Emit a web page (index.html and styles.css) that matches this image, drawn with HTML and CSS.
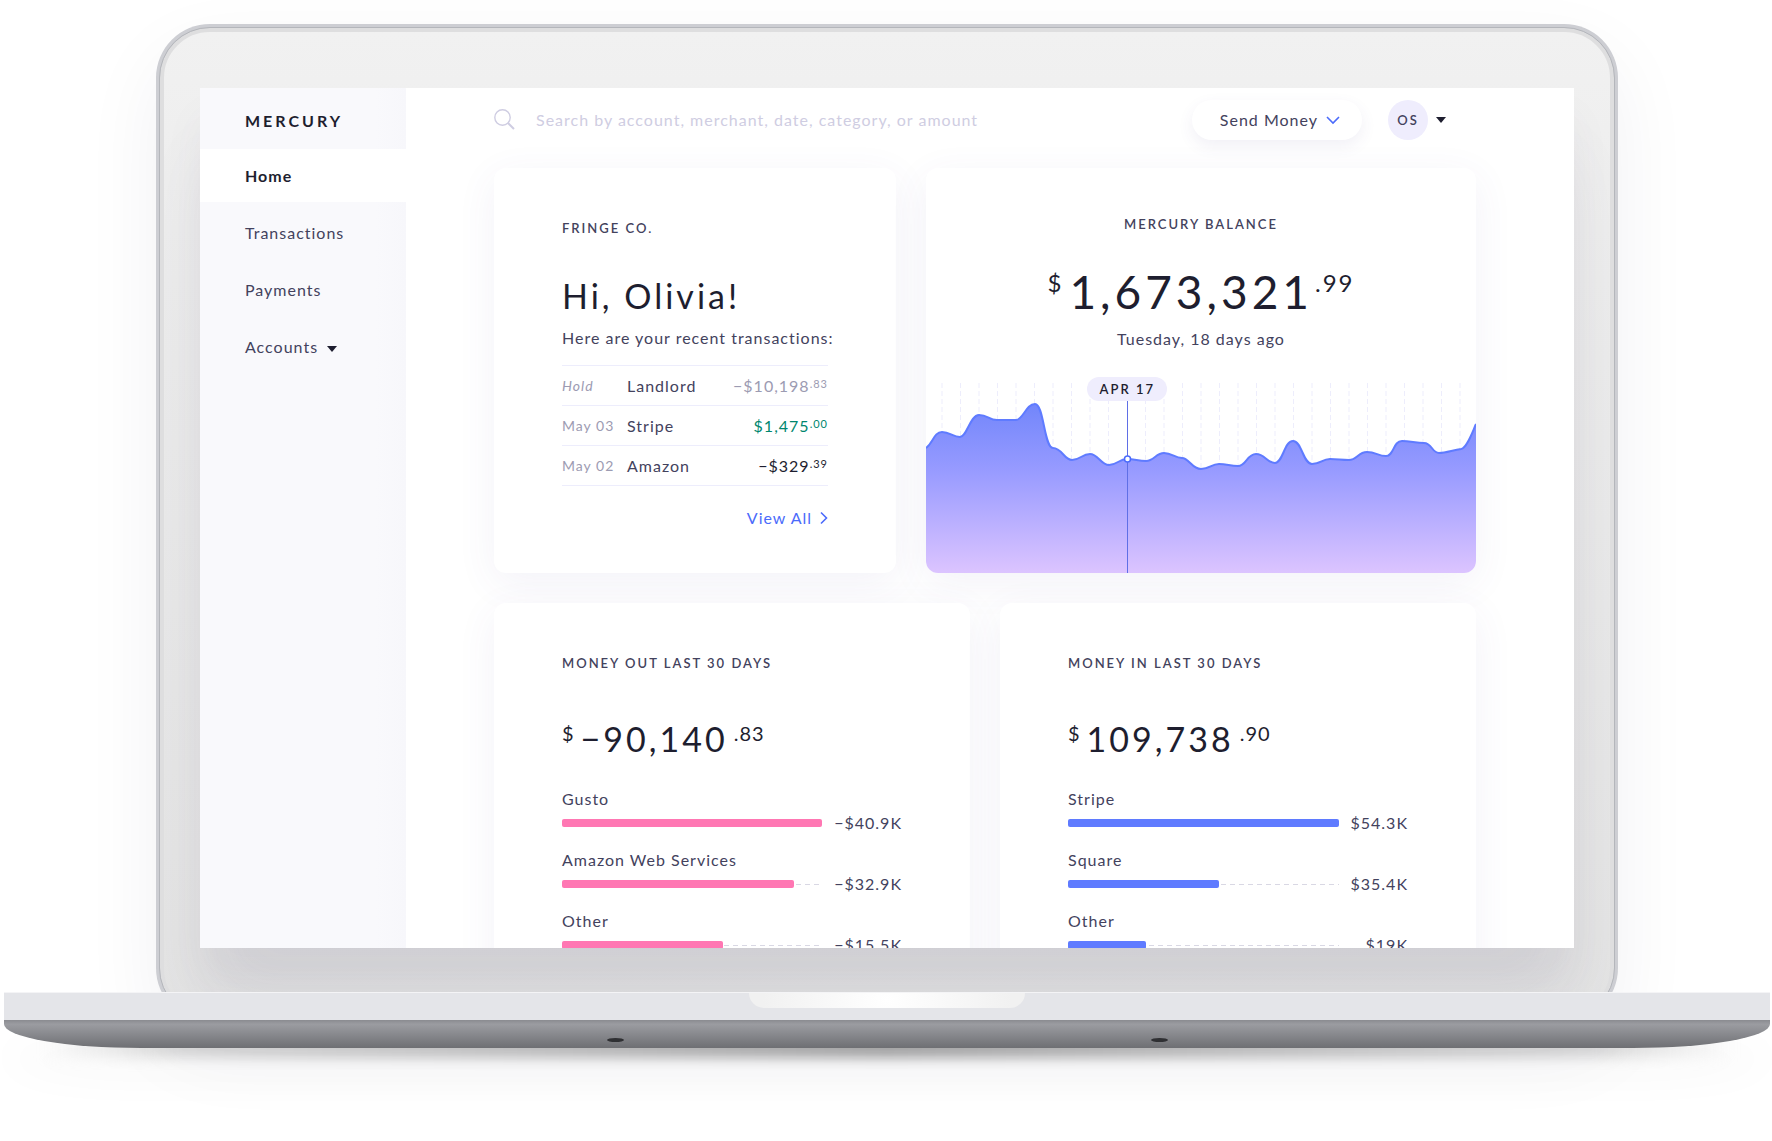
FILE: index.html
```html
<!DOCTYPE html>
<html lang="en">
<head>
    <meta charset="utf-8">
    <meta name="viewport" content="width=device-width, initial-scale=1">
    <title>Mercury</title>
    <link rel="stylesheet" href="styles.css">
</head>
<body>
    <div class="laptop">
        <div class="lid">
            <div class="bezel">
                <div class="screen">
                    <aside class="sidebar">
                        <a class="logo" href="#">MERCURY</a>
                        <nav class="nav">
                            <a class="active" href="#">Home</a>
                            <a href="#">Transactions</a>
                            <a href="#">Payments</a>
                            <a href="#">Accounts <span class="caret"></span></a>
                        </nav>
                    </aside>

                    <main class="main">
                        <header class="topbar">
                            <label class="search">
                                <svg width="22" height="22" viewBox="0 0 22 22" fill="none" stroke="currentColor">
                                    <circle cx="8.5" cy="8.5" r="7.7" stroke-width="1.4"/>
                                    <path d="M14 14l6 6" stroke-width="2"/>
                                </svg>
                                <input type="text" aria-label="Search" placeholder="Search by account, merchant, date, category, or amount">
                            </label>
                            <button class="send" type="button">
                                Send Money
                                <svg width="14" height="10" viewBox="0 0 14 10" fill="none" stroke="#4b6bfb" stroke-width="1.6">
                                    <path d="M1 2l6 6 6-6"/>
                                </svg>
                            </button>
                            <button class="user" type="button">
                                <span class="avatar">OS</span>
                                <span class="caret"></span>
                            </button>
                        </header>

                        <div class="row row-top">
                            <section class="card">
                                <h2 class="label">FRINGE CO.</h2>
                                <h1 class="greeting">Hi, Olivia!</h1>
                                <p class="intro">Here are your recent transactions:</p>
                                <table class="transactions">
                                    <tr class="hold">
                                        <td class="date">Hold</td>
                                        <td>Landlord</td>
                                        <td class="amount">−$10,198<sup>.83</sup></td>
                                    </tr>
                                    <tr class="credit">
                                        <td class="date">May 03</td>
                                        <td>Stripe</td>
                                        <td class="amount">$1,475<sup>.00</sup></td>
                                    </tr>
                                    <tr>
                                        <td class="date">May 02</td>
                                        <td>Amazon</td>
                                        <td class="amount">−$329<sup>.39</sup></td>
                                    </tr>
                                </table>
                                <a class="view-all" href="#">
                                    View All
                                    <svg width="8" height="14" viewBox="0 0 8 14" fill="none" stroke="currentColor" stroke-width="1.6">
                                        <path d="M1 1.5L6.500 7 1 12.500"/>
                                    </svg>
                                </a>
                            </section>

                            <section class="card balance">
                                <h2 class="label">MERCURY BALANCE</h2>
                                <p class="balance-total"><span class="unit">$</span>1,673,321<span class="unit cents">.99</span></p>
                                <p class="balance-date">Tuesday, 18 days ago</p>
                                <div class="chart">
                                    <svg viewBox="0 0 550 192" preserveAspectRatio="none">
                                        <defs>
                                            <linearGradient id="area" x1="0" y1="0" x2="0" y2="1">
                                                <stop offset="0" stop-color="#7286fb"/>
                                                <stop offset="0.4" stop-color="#989bff"/>
                                                <stop offset="1" stop-color="#dcc4ff"/>
                                            </linearGradient>
                                        </defs>
                                        <path class="grid-lines" d="M16 2V192M34.500 2V192M53 2V192M71.500 2V192M90 2V192M108.500 2V192M127 2V192M145.500 2V192M164 2V192M182.500 2V192M219.500 2V192M238 2V192M256.500 2V192M275 2V192M293.500 2V192M312 2V192M330.500 2V192M349 2V192M367.500 2V192M386 2V192M404.500 2V192M423 2V192M441.500 2V192M460 2V192M478.500 2V192M497 2V192M515.500 2V192M534 2V192"/>
                                        <path fill="url(#area)" d="M0 67C7 62 8 51 16 51S27 56 34 56 44 34 53 34 63 39 71 39H90C97 39 100 23 109 23S118 67 127 67 138 79 146 79 156 73 164 73 175 84 183 84 193 78 201 78 212 80 220 80 230 72 238 72 249 77 256 77 266 88 275 88 285 83 293 83 304 85 312 85 321 73 330 73 341 82 349 82 358 60 367 60 377 83 386 83 396 78 404 78 415 79 423 79 432 71 441 71 452 75 460 75 467 60 476 60C484 60 490 62 498 62S506 72 513 72C520 72 527 69 535 68C541 67 546 52 550 43V192H0Z"/>
                                        <path class="curve" d="M0 67C7 62 8 51 16 51S27 56 34 56 44 34 53 34 63 39 71 39H90C97 39 100 23 109 23S118 67 127 67 138 79 146 79 156 73 164 73 175 84 183 84 193 78 201 78 212 80 220 80 230 72 238 72 249 77 256 77 266 88 275 88 285 83 293 83 304 85 312 85 321 73 330 73 341 82 349 82 358 60 367 60 377 83 386 83 396 78 404 78 415 79 423 79 432 71 441 71 452 75 460 75 467 60 476 60C484 60 490 62 498 62S506 72 513 72C520 72 527 69 535 68C541 67 546 52 550 43"/>
                                        <path class="cursor" d="M201.500 18V192"/>
                                        <circle class="point" cx="201.500" cy="78" r="3"/>
                                    </svg>
                                    <span class="chart-date">APR 17</span>
                                </div>
                            </section>
                        </div>

                        <div class="row">
                            <section class="card flow out">
                                <h2 class="label">MONEY OUT LAST 30 DAYS</h2>
                                <p class="total"><span class="unit">$</span>−90,140<span class="unit">.83</span></p>
                                <div class="bars">
                                    <span class="name">Gusto</span>
                                    <div class="track"><div class="bar" style="width: 100%"></div></div>
                                    <span class="value">−$40.9K</span>
                                    <span class="name">Amazon Web Services</span>
                                    <div class="track"><div class="bar" style="width: 89%"></div></div>
                                    <span class="value">−$32.9K</span>
                                    <span class="name">Other</span>
                                    <div class="track"><div class="bar" style="width: 62%"></div></div>
                                    <span class="value">−$15.5K</span>
                                </div>
                            </section>

                            <section class="card flow in">
                                <h2 class="label">MONEY IN LAST 30 DAYS</h2>
                                <p class="total"><span class="unit">$</span>109,738<span class="unit">.90</span></p>
                                <div class="bars">
                                    <span class="name">Stripe</span>
                                    <div class="track"><div class="bar" style="width: 100%"></div></div>
                                    <span class="value">$54.3K</span>
                                    <span class="name">Square</span>
                                    <div class="track"><div class="bar" style="width: 56%"></div></div>
                                    <span class="value">$35.4K</span>
                                    <span class="name">Other</span>
                                    <div class="track"><div class="bar" style="width: 29%"></div></div>
                                    <span class="value">$19K</span>
                                </div>
                            </section>
                        </div>
                    </main>
                </div>
            </div>
        </div>

        <div class="base">
            <div class="deck"><div class="notch"></div></div>
            <div class="bottom">
                <span class="foot"></span>
                <span class="foot"></span>
            </div>
        </div>
    </div>
</body>
</html>
```
FILE: styles.css
```css
:root {
    --ink: #1e1e2f;
    --text: #43425d;
    --muted: #9c9bb2;
    --pale: #cfcde2;
    --line: #ededfc;
    --lavender: #efedfd;
    --blue: #4b6bfb;
    --bar-blue: #5f7bff;
    --pink: #ff77b3;
    --green: #00866e;
}

* {
    box-sizing: border-box;
}

body {
    margin: 0;
    background: #fff;
    color: var(--text);
    font-family: Lato, "Open Sans", sans-serif;
    font-size: 16px;
    line-height: 24px;
    letter-spacing: 1px;
    overflow-x: hidden;
}

h1, h2, p {
    margin: 0;
    font-weight: 400;
}

a {
    color: inherit;
    text-decoration: none;
}

button, input {
    border: 0;
    padding: 0;
    background: none;
    color: inherit;
    font: inherit;
    letter-spacing: inherit;
}

button {
    cursor: pointer;
}

/* laptop */
.laptop {
    padding: 24px 2px 90px 4px;
}

.lid {
    margin: 0 152px;
    padding: 4px;
    border-radius: 54px;
    background: #cdced3;
    box-shadow: 0 30px 80px rgba(40, 40, 60, 0.06);
}

.bezel {
    padding: 56px 36px 66px;
    border: 4px solid #dededf;
    border-radius: 50px;
    outline: 1px solid #b4b6bb;
    background: linear-gradient(#f1f1f1, #ececec 25%, #e3e3e3);
    overflow: hidden;
}

.screen {
    display: flex;
    aspect-ratio: 1374 / 860;
    background: #fff;
    box-shadow: 0 60px 60px -10px rgba(90, 85, 115, 0.1), 0 30px 40px rgba(90, 85, 115, 0.05);
    overflow: hidden;
}

.base {
    position: relative;
    margin-top: -30px;
}

.base::after {
    content: "";
    position: absolute;
    z-index: -1;
    left: 36px;
    right: 36px;
    bottom: -10px;
    height: 28px;
    background: linear-gradient(90deg, transparent, #ddd 8%, #aaa 50%, #ddd 92%, transparent);
    filter: blur(6px);
}

.deck {
    display: flex;
    justify-content: center;
    height: 28px;
    border-top: 1px solid #f4f4f6;
    background: #e4e5e9;
}

.notch {
    width: 276px;
    height: 15px;
    border-radius: 0 0 20px 20px;
    background: radial-gradient(circle at center, #fff, #f1f1f1 90%);
}

.bottom {
    display: flex;
    justify-content: center;
    align-items: flex-end;
    gap: 527px;
    height: 28px;
    padding-bottom: 6px;
    border-radius: 0 0 137px 137px / 0 0 24px 24px;
    background: linear-gradient(#8a8b90, #9b9ca1 15%, #6e6f73);
    box-shadow: 0 30px 40px rgba(0, 0, 0, 0.03);
}

.foot {
    width: 17px;
    height: 4px;
    border-radius: 50%;
    background: #2f3033;
}

/* sidebar */
.sidebar {
    flex: 0 0 206px;
    background: linear-gradient(90deg, #f9f9fc 85%, #f7f7fb);
}

.logo {
    display: block;
    padding: 21px 45px 16px;
    color: var(--ink);
    font-weight: 700;
    letter-spacing: 3px;
}

.nav {
    display: flex;
    flex-direction: column;
    gap: 4px;
}

.nav a {
    padding: 15px 45px 14px;
}

.nav .active {
    background: #fff;
    color: var(--ink);
    font-weight: 700;
}

.caret {
    display: inline-block;
    margin-left: 4px;
    border: 5px solid transparent;
    border-top: 6px solid var(--ink);
    border-bottom: 0;
    vertical-align: 1px;
}

/* content */
.main {
    flex: 1;
    min-width: 0;
    padding: 12px 98px 0 88px;
}

.topbar {
    display: flex;
    align-items: center;
    height: 40px;
    margin-bottom: 28px;
    padding-right: 30px;
}

.search {
    display: flex;
    flex: 1;
    align-items: center;
    gap: 20px;
    color: var(--pale);
}

.search input {
    flex: 1;
    color: var(--text);
    outline: none;
}

.search input::placeholder {
    color: var(--pale);
    opacity: 1;
}

.send {
    display: flex;
    align-items: center;
    gap: 8px;
    height: 40px;
    margin-right: 26px;
    padding: 0 22px 0 28px;
    border-radius: 20px;
    background: #fff;
    box-shadow: 0 6px 16px rgba(80, 70, 140, 0.08);
}

.user {
    display: flex;
    align-items: center;
    gap: 4px;
}

.avatar {
    width: 40px;
    border-radius: 50%;
    background: var(--lavender);
    font-size: 13px;
    font-weight: 600;
    line-height: 40px;
    letter-spacing: 2px;
}

.row {
    display: grid;
    grid-template-columns: 1fr 1fr;
    gap: 30px;
    margin-bottom: 30px;
}

.row-top {
    grid-template-columns: 402fr 550fr;
}

.card {
    min-width: 0;
    padding: 48px 68px 43px;
    border-radius: 12px;
    background: #fff;
    box-shadow: 0 10px 40px rgba(80, 70, 150, 0.07);
}

.label {
    font-size: 13px;
    font-weight: 600;
    letter-spacing: 2px;
    white-space: nowrap;
}

.greeting {
    margin-top: 32px;
    color: var(--ink);
    font-size: 34px;
    line-height: 48px;
    letter-spacing: 3px;
}

.intro {
    margin: 6px 0 15px;
    white-space: nowrap;
}

.transactions {
    width: 100%;
    border-collapse: collapse;
}

.transactions td {
    height: 40px;
    padding: 0;
    border-top: 1px solid var(--line);
    border-bottom: 1px solid var(--line);
}

.transactions .date {
    width: 65px;
    color: var(--muted);
    font-size: 14px;
}

.transactions .amount {
    color: var(--ink);
    text-align: right;
}

.transactions sup {
    font-size: 11px;
    line-height: 0;
    vertical-align: 4px;
}

.transactions .hold .date {
    font-style: italic;
}

.transactions .hold .amount {
    color: var(--muted);
}

.transactions .credit .amount {
    color: var(--green);
}

.view-all {
    display: flex;
    justify-content: flex-end;
    align-items: center;
    gap: 8px;
    margin-top: 20px;
    color: var(--blue);
}

/* balance card */
.balance {
    display: flex;
    flex-direction: column;
    padding: 44px 0 0;
    text-align: center;
    overflow: hidden;
}

.balance-total {
    display: flex;
    justify-content: center;
    margin-top: 24px;
    color: var(--ink);
    font-size: 46px;
    line-height: 64px;
    letter-spacing: 4px;
}

.balance-total .unit {
    font-size: 24px;
    line-height: 46px;
    letter-spacing: 2px;
    margin-right: 6px;
}

.balance-total .cents {
    margin: 0 0 0 2px;
}

.balance-date {
    margin-top: 3px;
}

.chart {
    position: relative;
    margin-top: auto;
}

.chart svg {
    display: block;
    width: 100%;
    height: 192px;
}

.grid-lines {
    stroke: var(--line);
    stroke-dasharray: 5 3;
}

.curve {
    fill: none;
    stroke: var(--bar-blue);
    stroke-width: 2;
}

.cursor {
    stroke: #5f6fe6;
}

.point {
    fill: #fff;
    stroke: var(--blue);
    stroke-width: 1.5;
}

.chart-date {
    position: absolute;
    top: -4px;
    left: 36.6%;
    width: 80px;
    margin-left: -40px;
    border-radius: 12px;
    background: var(--lavender);
    color: var(--ink);
    font-size: 13px;
    font-weight: 600;
    letter-spacing: 2px;
}

/* money in / money out */
.total {
    display: flex;
    margin: 40px 0 24px;
    color: var(--ink);
    font-size: 34px;
    line-height: 48px;
    letter-spacing: 3px;
}

.total .unit {
    font-size: 20px;
    line-height: 36px;
    letter-spacing: 1px;
}

.total .unit:first-child {
    margin-right: 6px;
}

.total .unit:last-child {
    margin-left: 6px;
}

.bars {
    display: grid;
    grid-template-columns: 1fr auto;
    align-items: center;
    column-gap: 12px;
}

.name {
    grid-column: 1 / -1;
}

.track {
    height: 8px;
    margin-bottom: 13px;
    background: linear-gradient(90deg, #d9d8e4 60%, transparent 0) 0 4px / 9px 1px repeat-x;
}

.bar {
    height: 8px;
    border-radius: 2px;
    background: var(--pink);
}

.in .bar {
    background: var(--bar-blue);
}

.value {
    margin-bottom: 13px;
    text-align: right;
}
```
